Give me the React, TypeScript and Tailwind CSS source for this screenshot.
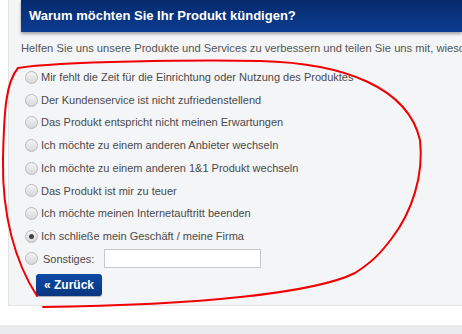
import React from "react";

const options = [
  "Mir fehlt die Zeit für die Einrichtung oder Nutzung des Produktes",
  "Der Kundenservice ist nicht zufriedenstellend",
  "Das Produkt entspricht nicht meinen Erwartungen",
  "Ich möchte zu einem anderen Anbieter wechseln",
  "Ich möchte zu einem anderen 1&1 Produkt wechseln",
  "Das Produkt ist mir zu teuer",
  "Ich möchte meinen Internetauftritt beenden",
  "Ich schließe mein Geschäft / meine Firma",
];

function Radio({ checked }: { checked?: boolean }) {
  return (
    <span className="flex h-[13px] w-[13px] shrink-0 items-center justify-center rounded-full border border-[#b9b9b9] bg-gradient-to-b from-[#f4f4f4] to-[#d8d8d8]">
      {checked && <span className="h-[5px] w-[5px] rounded-full bg-[#444]" />}
    </span>
  );
}

export default function App() {
  return (
    <div className="relative h-[334px] w-[462px] overflow-hidden bg-white font-['Liberation_Sans',Arial,sans-serif]">
      <div className="ml-[8px] h-[306px] border-l border-b border-[#e3e4e6] bg-[#f4f5f7] pl-[12px]">
        <div className="flex h-[32px] items-center bg-gradient-to-b from-[#062a6e] to-[#0b3d91] pl-[8px] shadow-[0_2px_3px_rgba(0,0,0,0.35)]">
          <span className="text-[13px] font-bold text-white">Warum möchten Sie Ihr Produkt kündigen?</span>
        </div>
        <p className="mt-[9px] whitespace-nowrap text-[11.2px] leading-[14px] text-[#555]">
          Helfen Sie uns unsere Produkte und Services zu verbessern und teilen Sie uns mit, wieso
        </p>
        <div className="mt-[11px] flex flex-col pl-[4px]">
          {options.map((o, i) => (
            <label key={o} className="flex h-[22.7px] items-center gap-[3px]">
              <Radio checked={i === 7} />
              <span className="whitespace-nowrap text-[11px] text-[#4a4a4a]">{o}</span>
            </label>
          ))}
          <label className="flex h-[22.7px] items-center">
            <Radio />
            <span className="ml-[5px] text-[11px] text-[#4a4a4a]">Sonstiges:</span>
            <span className="ml-[10px] block h-[19px] w-[157px] border border-[#c8c8c8] bg-white" />
          </label>
        </div>
        <button className="ml-[15px] mt-[4px] flex h-[22px] w-[66px] items-center justify-center rounded-[3px] bg-gradient-to-b from-[#0e4aa6] to-[#08357f] text-[12px] font-bold text-white shadow-[0_1px_1px_rgba(0,0,0,0.3)]">
          « Zurück
        </button>
      </div>
      <div className="mt-[19px] h-[10px] bg-[#e9eaec]" />
      <svg className="pointer-events-none absolute left-0 top-0" width="462" height="334" viewBox="0 0 462 334">
        <path
          d="M 37 296 C 15 262, 2 215, 3 160 C 4 110, 6 82, 18 68 C 60 61, 200 60, 260 61 C 345 63, 408 88, 420 140 C 424 175, 412 212, 392 238 C 380 254, 372 262, 355 273 C 315 293, 200 305, 43 307"
          fill="none"
          stroke="#f00000"
          strokeWidth="2"
          strokeLinecap="round"
        />
      </svg>
    </div>
  );
}
